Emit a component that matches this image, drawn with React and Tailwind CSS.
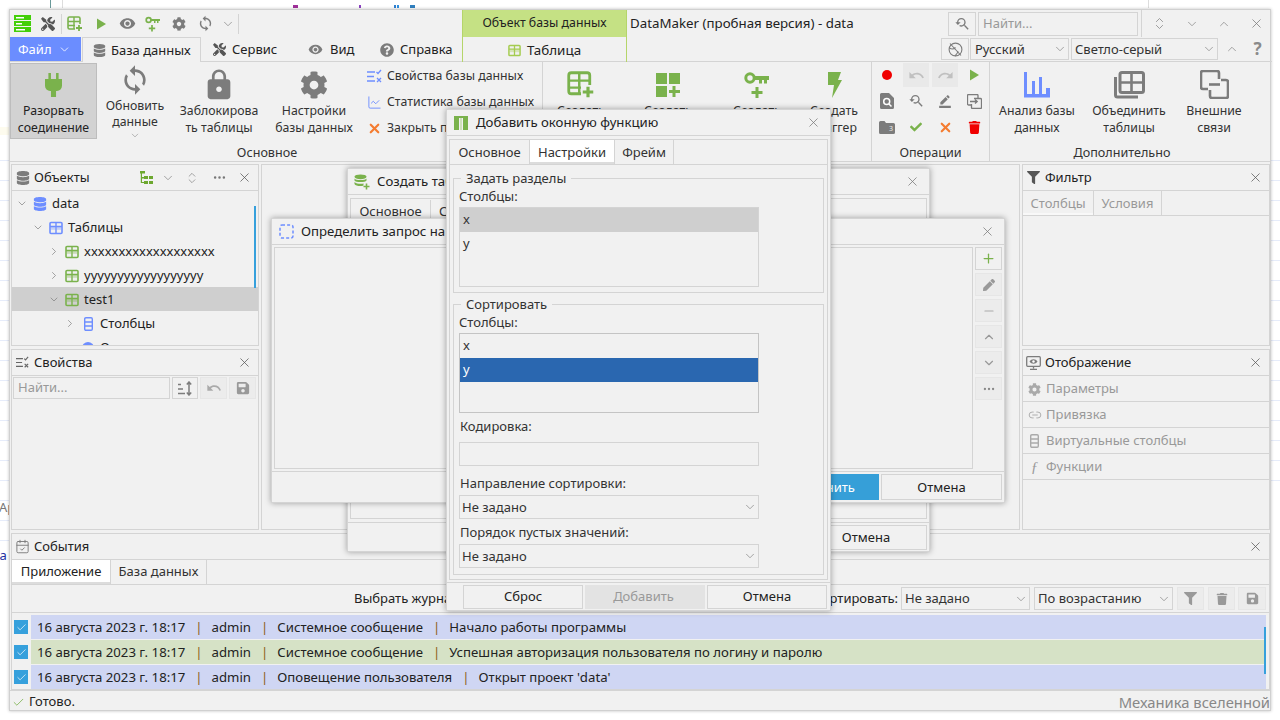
import React from "react";
import { ChevronDown, ChevronUp, ChevronRight, ChevronsUpDown, X, Ellipsis, ChartLine, Plus, Minus, CalendarCheck, Check, Link2 } from "lucide-react";
import { FaTools, FaCog, FaDatabase, FaQuestionCircle, FaCheck, FaTrash, FaFilter, FaSave, FaPen } from "react-icons/fa";
import { MdVisibility, MdSync, MdLock, MdUndo, MdRedo, MdYoutubeSearchedFor, MdBorderColor } from "react-icons/md";

const G = "#7ab24c";
const GR = "#7c7c7c";
const BL = "#6e8eff";

const TableIcon = ({ c = G, s = 14 }) => (
  <svg width={s} height={s} viewBox="0 0 14 14"><rect x="1" y="1.5" width="12" height="11" rx="1" fill="none" stroke={c} strokeWidth="1.6" /><path d="M1 5.5h12M7 2v10" stroke={c} strokeWidth="1.4" /><rect x="2" y="6" width="4.5" height="2.8" fill={c} opacity=".35" /><rect x="7.5" y="6" width="4.5" height="2.8" fill={c} opacity=".35" /></svg>
);
const MenuIcon = () => (
  <svg width="17" height="17" viewBox="0 0 17 17"><path d="M0 0h17v5H0zM0 6h17v5H0zM0 12h17v5H0z" fill="#43cf08" /><path d="M2 2h8v1.4H2zM2 8h6v1.4H2zM2 14h9v1.4H2z" fill="#fff" /></svg>
);
const TablePlus = ({ s = 16 }) => (
  <svg width={s} height={s} viewBox="0 0 16 16"><path d="M8 13H2.5A1.5 1.5 0 0 1 1 11.5v-9A1.5 1.5 0 0 1 2.5 1h9A1.5 1.5 0 0 1 13 2.500V8" fill="none" stroke={G} strokeWidth="1.6" /><path d="M1 5.500h12M1 9.500h7M7 1v12" stroke={G} strokeWidth="1.400" /><path d="M12 9v6M9 12h6" stroke={G} strokeWidth="1.800" /></svg>
);
const Play = ({ s = 12 }) => (<svg width={s} height={s} viewBox="0 0 12 12"><path d="M2 0.500 11 6 2 11.500z" fill={G} /></svg>);
const KeyPlus = ({ s = 16 }) => (
  <svg width={s} height={s} viewBox="0 0 16 16"><circle cx="3.600" cy="4" r="2.400" fill="none" stroke={G} strokeWidth="1.700" /><path d="M6 3h9v2h-1.500v2H12V5h-1.500v2H9V5H6z" fill={G} /><path d="M7 9v6.500M3.800 12.300h6.400" stroke={G} strokeWidth="1.700" /></svg>
);
const Plug = () => (
  <svg width="17" height="24" viewBox="0 0 20 28"><path d="M4 0h3v7H4zM13 0h3v7h-3z" fill={G} /><path d="M0 7h20v8a6 6 0 0 1-6 6h-1v7H7v-7H6a6 6 0 0 1-6-6z" fill={G} /></svg>
);
const PropsIcon = ({ c = BL, s = 15 }) => (
  <svg width={s} height={s} viewBox="0 0 15 15" fill="none" stroke={c} strokeWidth="1.300"><path d="M0 3h8M0 7.500h7M0 12h8" /><path d="M9.500 3l1.500 1.500L14 1M10 9l4 4M14 9l-4 4" /></svg>
);
const IndexPlus = () => (
  <svg width="26" height="26" viewBox="0 0 26 26"><path d="M1 1h11v11H1zM14 1h11v11H14zM1 14h11v11H1z" fill={G} /><path d="M19 14v11M14 19.500h11" stroke={G} strokeWidth="3" /></svg>
);
const KeyBig = () => (
  <svg width="26" height="28" viewBox="0 0 26 28"><circle cx="6" cy="7" r="4.200" fill="none" stroke={G} strokeWidth="3" /><path d="M10 5h15v4h-2v3.500h-3V9h-2v3.500h-3V9h-5z" fill={G} /><path d="M13 16v11M7.500 21.500h11" stroke={G} strokeWidth="3" /></svg>
);
const Bolt = () => (<svg width="15" height="26" viewBox="0 0 15 26"><path d="M1 0h13l-3 8h4L5 26l2-13H1z" fill={G} /></svg>);
const Bars = () => (<svg width="28" height="26" viewBox="0 0 28 26"><path d="M1 0h3v22h5V9h3v13h4V5h3v17h4v-6h4v9.500H1z" fill={BL} /></svg>);
const MergeTbl = () => (
  <svg width="31" height="28" viewBox="0 0 31 28" fill="none" stroke={GR}><rect x="6" y="1.500" width="23.500" height="20" rx="2" strokeWidth="3" /><path d="M6 11.500h23M17.500 2v19" strokeWidth="2.600" /><path d="M1.500 6v18a2 2 0 0 0 2 2H24" strokeWidth="3" /></svg>
);
const Linked = ({ s = 29 }) => (
  <svg width={s} height={s} viewBox="0 0 29 29" fill="none" stroke={GR} strokeWidth="2.600"><path d="M8 19H3a2 2 0 0 1-2-2V3a2 2 0 0 1 2-2h14a2 2 0 0 1 2 2v6" /><path d="M21 10h5a2 2 0 0 1 2 2v14a2 2 0 0 1-2 2H12a2 2 0 0 1-2-2v-6" /><path d="M9 14.500h11" /></svg>
);
const DocSearch = () => (
  <svg width="14" height="16" viewBox="0 0 14 16"><path d="M0 1.500A1.500 1.500 0 0 1 1.500 0H9l5 5v9.500a1.500 1.500 0 0 1-1.500 1.500h-11A1.500 1.500 0 0 1 0 14.500z" fill={GR} /><circle cx="6.700" cy="8.500" r="3" fill="none" stroke="#fff" strokeWidth="1.500" /><path d="M9 11l2.500 2.500" stroke="#fff" strokeWidth="1.500" /></svg>
);
const CopyIn = () => (
  <svg width="15" height="15" viewBox="0 0 15 15" fill="none" stroke={GR} strokeWidth="1.300"><path d="M4 11H1.500a1 1 0 0 1-1-1V1.500a1 1 0 0 1 1-1H10a1 1 0 0 1 1 1V4" /><path d="M7 4.500h6.500a1 1 0 0 1 1 1v8a1 1 0 0 1-1 1H5.500a1 1 0 0 1-1-1V10" /><path d="M3 7.500h7M8 5.500l2.200 2-2.200 2" /></svg>
);
const Folder3 = () => (
  <svg width="16" height="13" viewBox="0 0 16 13"><path d="M0 1.500A1.500 1.500 0 0 1 1.500 0h4L7 2h7.500A1.500 1.500 0 0 1 16 3.500v8a1.500 1.500 0 0 1-1.500 1.500h-13A1.500 1.500 0 0 1 0 11.500z" fill={GR} /><text x="10" y="10" fontSize="7" fill="#eee">3</text></svg>
);
const TreeGreen = () => (
  <svg width="13" height="13" viewBox="0 0 13 13"><path d="M0 0h5v2.500H2V6h2V5h4v3H4V7.500H2V11h2v-1h4v3H4v-1H.8V2.500H0z" fill="#6da82f" /><path d="M9 5h4v3H9zM9 10h4v3H9z" fill="#6da82f" /></svg>
);
const NoGlobe = () => (
  <svg width="15" height="15" viewBox="0 0 15 15" fill="none" stroke={GR} strokeWidth="1.100"><circle cx="7.500" cy="7.500" r="6.400" /><path d="M2 1.500l11 12M1.500 6c3 2 5 .5 6-.5M7 14c2-2 3-4 3-5" /></svg>
);
const ColIcon = ({ c = BL }) => (
  <svg width="9" height="14" viewBox="0 0 9 14" fill="none" stroke={c} strokeWidth="1.400"><rect x=".7" y=".7" width="7.600" height="12.600" rx="1.200" /><path d="M1 5h7M1 9h7" /></svg>
);
const DbPlus = () => (
  <svg width="16" height="16" viewBox="0 0 16 16"><ellipse cx="6.500" cy="2.800" rx="6" ry="2.400" fill={G} /><path d="M.5 4.500c1 2 11 2 12 0v2c-1 2-11 2-12 0zM.5 8c1 2 8 2 9 1.500v2c-2 1-8 .8-9-1.500z" fill={G} /><path d="M12.500 9.500v6M9.500 12.500h6" stroke={G} strokeWidth="1.600" /></svg>
);
const Dashed = () => (<svg width="15" height="15" viewBox="0 0 15 15"><rect x="1" y="1" width="13" height="13" rx="2" fill="none" stroke={BL} strokeWidth="1.500" strokeDasharray="3 2.100" /></svg>);
const WinFn = () => (<svg width="14" height="14" viewBox="0 0 14 14"><path d="M0 0h14v14H0z" fill={G} /><path d="M5 2h4v12H5z" fill="#f1f1f1" /><path d="M6 2h2v12H6z" fill="#cfe0bd" /></svg>);
const MonitorEye = () => (
  <svg width="15" height="14" viewBox="0 0 15 14" fill="none"><rect x=".7" y=".7" width="13.600" height="9.600" rx="1" stroke={GR} strokeWidth="1.300" /><path d="M3.500 5.500C5.500 2.500 9.500 2.500 11.500 5.500 9.500 8.500 5.500 8.500 3.500 5.500z" fill={GR} /><circle cx="7.500" cy="5.500" r="1.200" fill="#fff" /><path d="M7.500 10.500v2M4 13.300h7" stroke={GR} strokeWidth="1.300" /></svg>
);
const SortIcon = () => (
  <svg width="15" height="15" viewBox="0 0 15 15" fill="none" stroke={GR} strokeWidth="1.500"><path d="M0 3.500h3M0 8h5M0 12.500h7M11 1v13M8.800 3.500 11 1l2.200 2.500M8.800 11.500 11 14l2.200-2.500" /></svg>
);

const Down = ({ s = 14, c = "#8a8a8a" }) => <ChevronDown size={s} color={c} strokeWidth={1.300} />;
const Close = ({ c = "#555" }) => <X size={15} color={c} strokeWidth={1.200} />;

const Select = ({ v, cls, tc = "" }) => (
  <div className={`flex items-center justify-between border border-[#d4d4d4] pl-[5px] pr-[1px] text-[#333] ${cls}`}>
    <span className={tc}>{v}</span><Down />
  </div>
);

const IconBtn = ({ children, cls = "", dis }) => (
  <div className={`flex items-center justify-center border ${dis ? "border-[#e6e6e6] bg-[#ececec]" : "border-[#d4d4d4]"} ${cls}`}>{children}</div>
);

const Big = ({ icon, a, b, w }) => (
  <div className={`flex flex-col items-center pt-[5px] ${w}`}>
    <div className="flex h-[35px] items-center justify-center">{icon}</div>
    <span className="whitespace-nowrap leading-[17px]">{a}</span>
    <span className="whitespace-nowrap leading-[17px]">{b}</span>
  </div>
);

const Section = ({ w, label, labelCls = "", children }) => (
  <div className={`flex shrink-0 flex-col border-r border-[#d4d4d4] ${w}`}>
    <div className="flex h-[79px]">{children}</div>
    <div className={`flex flex-1 items-start justify-center pt-[3px] text-[12.6px] leading-[17px] ${labelCls}`}>{label}</div>
  </div>
);

const Op = ({ children, dis }) => (
  <div className={`flex h-[24px] w-[26px] items-center justify-center ${dis ? "bg-[#e9e9e9]" : ""}`}>{children}</div>
);

const PanelHead = ({ icon, title, right }) => (
  <div className="flex h-[26px] shrink-0 items-center border-b border-[#d4d4d4] pl-[2px] pr-[6px]">
    <span className="flex w-[17px] justify-center">{icon}</span>
    <span className="ml-[3px] flex-1 text-[#222]">{title}</span>
    {right}
    <Close />
  </div>
);

const tree = [
  { pl: "pl-[4px]", ic: <FaDatabase size={14} color={BL} />, t: "data" },
  { pl: "pl-[20px]", ic: <TableIcon c={BL} />, t: "Таблицы" },
  { pl: "pl-[36px]", right: 1, ic: <TableIcon />, t: "xxxxxxxxxxxxxxxxxxx" },
  { pl: "pl-[36px]", right: 1, ic: <TableIcon />, t: "yyyyyyyyyyyyyyyyyy" },
  { pl: "pl-[36px]", ic: <TableIcon />, t: "test1", sel: 1 },
  { pl: "pl-[52px]", right: 1, ic: <ColIcon />, t: "Столбцы" },
  { pl: "pl-[52px]", none: 1, ic: <span className="h-[12px] w-[12px] rounded-full bg-[#6e8eff]" />, t: "Ограничения" },
];

const logs = [
  { bg: "bg-[#cfd6f3]", d: "Системное сообщение", m: "Начало работы программы" },
  { bg: "bg-[#d6e2c6]", d: "Системное сообщение", m: "Успешная авторизация пользователя по логину и паролю" },
  { bg: "bg-[#cfd6f3]", d: "Оповещение пользователя", m: "Открыт проект 'data'" },
];

const Bar = () => <span className="ml-[10px] mr-[9px] text-[#8b5a14]">|</span>;

const Dialog = ({ pos, icon, title, children }) => (
  <div className={`absolute flex flex-col border border-[#d4d4d4] bg-[#f1f1f1] shadow-[0_0_6px_rgba(0,0,0,0.35)] ${pos}`}>
    <div className="flex h-[26px] shrink-0 items-center border-b border-[#d4d4d4] pl-[6px] pr-[9px]">
      <span className="flex w-[16px] justify-center">{icon}</span>
      <span className="ml-[7px] flex-1 whitespace-nowrap pt-px text-[13.2px] text-[#222]">{title}</span>
      <Close c="#777" />
    </div>
    {children}
  </div>
);

const Group = ({ title, cls, children }) => (
  <div className={`relative border border-[#d4d4d4] px-[5px] ${cls}`}>
    <span className="absolute left-[7px] top-[-9px] bg-[#f1f1f1] px-[5px] leading-[17px] text-[#333]">{title}</span>
    {children}
  </div>
);

const ListBox = ({ dark, sel }) => (
  <div className={`flex h-[80px] w-[300px] flex-col border ${dark ? "border-[#c4c4c4]" : "border-[#d4d4d4]"}`}>
    <div className={`flex h-[24px] items-center pl-[3px] ${sel === 0 ? "bg-[#cfcfcf]" : ""}`}>x</div>
    <div className={`flex h-[24px] items-center pl-[3px] ${sel === 1 ? "bg-[#2a67b0] text-white" : ""}`}>y</div>
  </div>
);

export default function App() {
  return (
    <div className="relative h-[720px] w-[1280px] overflow-hidden bg-white pl-[9px] pt-[9px] font-['Noto_Sans',sans-serif] text-[13px] text-[#333]">
      {/* Desktop behind the window */}
      <div className="absolute left-0 top-[160px] h-[400px] w-[9px] bg-[repeating-linear-gradient(180deg,#e6ecfa_0,#e6ecfa_1px,transparent_1px,transparent_20px)]" />
      <div className="absolute right-0 top-[160px] h-[330px] w-[9px] bg-[repeating-linear-gradient(180deg,#e6ecfa_0,#e6ecfa_1px,transparent_1px,transparent_20px)]" />
      <div className="absolute left-0 top-[127px] h-[8px] w-[9px] bg-[#fdfbee]" />
      <span className="absolute left-[-1px] top-[498px] text-[#777]">Ap</span>
      <span className="absolute left-[-4px] top-[546px] text-[#2030a0]">Ja</span>
      <div className="absolute left-[50px] top-0 h-[8px] w-px bg-[#6a9a9a]" />
      <div className="absolute left-[62px] top-0 h-[8px] w-px bg-[#dddddd]" />
      <div className="absolute left-[1148px] top-0 h-[8px] w-px bg-[#dddddd]" />
      <div className="absolute left-[293px] top-[5px] h-[3px] w-[5px] bg-[#a0309a]" />
      <div className="absolute left-[359px] top-[5px] h-[3px] w-[2px] bg-[#8a40c0]" />
      <div className="absolute left-[394px] top-[5px] h-[3px] w-[2px] bg-[#3080d0]" />
      <div className="absolute left-[397px] top-[5px] h-[3px] w-[2px] bg-[#3090e0]" />
      <div className="absolute left-[410px] top-[5px] h-[3px] w-[5px] bg-[#3080c0]" />

      {/* Main window */}
      <div className="relative flex h-[702px] w-[1262px] flex-col border border-[#d0d0d0] bg-[#f1f1f1] shadow-[0_0_3px_rgba(0,0,0,0.25)]">
        {/* Header */}
        <div className="flex h-[52px] shrink-0">
          <div className="flex w-[452px] shrink-0 flex-col">
            <div className="flex h-[27px] items-center">
              <div className="flex w-[25px] justify-center"><MenuIcon /></div>
              <div className="flex w-[26px] justify-center"><FaTools size={14} color="#555" /></div>
              <div className="h-[20px] w-px bg-[#d4d4d4]" />
              <div className="flex w-[26px] justify-center"><TablePlus /></div>
              <div className="flex w-[26px] justify-center"><Play /></div>
              <div className="flex w-[26px] justify-center"><MdVisibility size={17} color={GR} /></div>
              <div className="flex w-[26px] justify-center"><KeyPlus /></div>
              <div className="flex w-[26px] justify-center"><FaCog size={14} color={GR} /></div>
              <div className="flex w-[26px] justify-center"><MdSync size={17} color={GR} /></div>
              <div className="flex w-[20px] justify-center"><Down /></div>
              <div className="h-[20px] w-px bg-[#d4d4d4]" />
            </div>
            <div className="flex h-[25px] items-stretch border-b border-[#d4d4d4]">
              <div className="flex w-[71px] items-center bg-[#6b8dff] pl-[8px] pt-px text-white">Файл<ChevronDown className="ml-[6px]" size={13} color="#fff" strokeWidth={1.500} /></div>
              <div className="z-10 ml-px -mb-px flex w-[119px] items-center border-x border-t border-[#d4d4d4] bg-[#f1f1f1] pl-[10px] pt-px text-[#222]"><FaDatabase size={13} color={GR} /><span className="ml-[5px]">База данных</span></div>
              <div className="flex w-[94px] items-center pl-[12px] pt-px text-[#222]"><FaTools size={13} color="#555" /><span className="ml-[6px]">Сервис</span></div>
              <div className="flex w-[72px] items-center pl-[13px] pt-px text-[#222]"><MdVisibility size={15} color={GR} /><span className="ml-[7px]">Вид</span></div>
              <div className="flex flex-1 items-center pl-[13px] pt-px text-[#222]"><FaQuestionCircle size={14} color={GR} /><span className="ml-[6px]">Справка</span></div>
            </div>
          </div>
          <div className="flex w-[165px] shrink-0 flex-col border-x border-[#b5d56a]">
            <div className="flex h-[27px] items-center justify-center bg-[#c5e184] text-[12.3px] text-[#222]">Объект базы данных</div>
            <div className="flex h-[25px] items-center justify-center border-b border-[#d4d4d4] pt-[2px] text-[13.400px] text-[#222]"><TableIcon c="#a5cc50" s={13} /><span className="ml-[6px]">Таблица</span></div>
          </div>
          <div className="flex flex-1 flex-col">
            <div className="flex h-[27px] items-center">
              <span className="ml-[3px] w-[318px] whitespace-nowrap text-[13.3px] text-[#222]">DataMaker (пробная версия) - data</span>
              <IconBtn cls="h-[24px] w-[28px]"><MdYoutubeSearchedFor size={16} color={GR} /></IconBtn>
              <div className="ml-[2px] flex h-[24px] w-[160px] items-center border border-[#d4d4d4] pl-[4px] text-[#999]">Найти...</div>
              <div className="ml-[3px] h-[27px] w-px bg-[#d4d4d4]" />
              <div className="flex w-[34px] justify-center"><ChevronsUpDown size={15} color="#8a8a8a" strokeWidth={1.300} /></div>
              <div className="flex w-[32px] justify-center"><Down /></div>
              <div className="flex w-[32px] justify-center"><ChevronUp size={14} color="#8a8a8a" strokeWidth={1.300} /></div>
              <div className="flex w-[32px] justify-center"><X size={15} color="#777" strokeWidth={1.200} /></div>
            </div>
            <div className="flex h-[25px] items-start border-b border-[#d4d4d4] pt-[1px]">
              <IconBtn cls="ml-[314px] h-[22px] w-[28px]"><NoGlobe /></IconBtn>
              <Select v="Русский" tc="pt-px" cls="ml-px h-[22px] w-[99px] !pl-[4px]" />
              <Select v="Светло-серый" tc="pt-px" cls="ml-[2px] h-[22px] w-[147px] !pl-[3px]" />
              <div className="flex h-[22px] w-[27px] items-center justify-center"><ChevronUp size={14} color="#8a8a8a" strokeWidth={1.300} /></div>
              <div className="flex h-[22px] w-[25px] items-center justify-center text-[17px] font-bold text-[#8a8a8a]">?</div>
            </div>
          </div>
        </div>

        {/* Ribbon */}
        <div className="flex h-[100px] shrink-0 border-b border-[#d4d4d4] text-[12.3px]">
          <Section w="w-[533px]" label="Основное" labelCls="pr-[18px]">
            <div className="mt-px flex h-[76px] w-[87px] flex-col items-center border border-[#bdbdbd] bg-[#d2d2d2] pt-[3px]">
              <div className="flex h-[35px] items-center justify-center"><Plug /></div>
              <span className="leading-[17px] text-[#222]">Разорвать</span>
              <span className="leading-[17px] text-[#222]">соединение</span>
            </div>
            <div className="flex w-[76px] flex-col items-center pt-[1px]">
              <div className="flex h-[36px] items-center"><MdSync size={32} color={GR} /></div>
              <span className="mt-[2px] leading-[16px]">Обновить</span>
              <span className="leading-[16px]">данные</span>
              <ChevronDown size={12} color="#8a8a8a" strokeWidth={1.300} />
            </div>
            <Big w="ml-[2px] w-[88px]" icon={<MdLock size={34} color={GR} />} a="Заблокирова" b="ть таблицы" />
            <Big w="w-[102px]" icon={<FaCog size={28} color={GR} />} a="Настройки" b="базы данных" />
            <div className="flex flex-col pl-[2px] pt-[1px]">
              <div className="flex h-[26px] items-center"><PropsIcon /><span className="ml-[5px] whitespace-nowrap">Свойства базы данных</span></div>
              <div className="flex h-[26px] items-center"><ChartLine size={15} color={BL} strokeWidth={1.500} /><span className="ml-[5px] whitespace-nowrap">Статистика базы данных</span></div>
              <div className="flex h-[26px] items-center"><X size={15} color="#f47c30" strokeWidth={3.500} /><span className="ml-[5px] whitespace-nowrap">Закрыть проект</span></div>
            </div>
          </Section>
          <Section w="w-[329px]" label="Создание">
            <Big w="w-[76px]" icon={<TablePlus s={28} />} a="Создать" b="таблицу" />
            <Big w="w-[98px]" icon={<IndexPlus />} a="Создать" b="индекс" />
            <Big w="w-[80px]" icon={<KeyBig />} a="Создать" b="ключ" />
            <Big w="w-[74px]" icon={<Bolt />} a="Создать" b="триггер" />
          </Section>
          <Section w="w-[118px]" label="Операции">
            <div className="grid grid-cols-[26px_26px_26px_26px] grid-rows-[26px_26px_26px] gap-x-[3px] pl-[2px] pt-px">
              <Op><span className="h-[10px] w-[10px] rounded-full bg-[#f00000]" /></Op>
              <Op dis><MdUndo size={17} color="#c0c0c0" /></Op>
              <Op dis><MdRedo size={17} color="#c0c0c0" /></Op>
              <Op><Play /></Op>
              <Op><DocSearch /></Op>
              <Op><MdYoutubeSearchedFor size={16} color={GR} /></Op>
              <Op><MdBorderColor size={14} color={GR} /></Op>
              <Op><CopyIn /></Op>
              <Op><Folder3 /></Op>
              <Op><FaCheck size={12} color={G} /></Op>
              <Op><X size={15} color="#f47c30" strokeWidth={3.500} /></Op>
              <Op><FaTrash size={13} color="#f00000" /></Op>
            </div>
          </Section>
          <Section w="flex-1 !border-r-0" label="Дополнительно" labelCls="pr-[16px]">
            <Big w="w-[94px]" icon={<Bars />} a="Анализ базы" b="данных" />
            <Big w="w-[90px]" icon={<MergeTbl />} a="Объединить" b="таблицы" />
            <Big w="ml-[2px] w-[76px]" icon={<Linked />} a="Внешние" b="связи" />
          </Section>
        </div>

        {/* Docks */}
        <div className="mt-[2px] flex h-[366px] shrink-0 gap-[2px] pl-px">
          <div className="flex w-[248px] shrink-0 flex-col gap-[3px]">
            <div className="relative flex h-[182px] flex-col overflow-hidden border border-[#d4d4d4]">
              <PanelHead
                icon={<FaDatabase size={14} color={GR} />}
                title="Объекты"
                right={
                  <div className="flex items-center">
                    <TreeGreen />
                    <span className="ml-[8px]"><Down /></span>
                    <span className="ml-[10px]"><ChevronsUpDown size={14} color="#8a8a8a" strokeWidth={1.300} /></span>
                    <span className="ml-[13px] mr-[10px]"><Ellipsis size={15} color="#777" /></span>
                  </div>
                }
              />
              {tree.map((r) => (
                <div key={r.t} className={`flex h-[24px] shrink-0 items-center pt-px ${r.pl} ${r.sel ? "bg-[#cfcfcf]" : ""}`}>
                  <span className="flex w-[12px] justify-center">
                    {r.none ? null : r.right ? <ChevronRight size={13} color="#777" strokeWidth={1.300} /> : <ChevronDown size={13} color="#777" strokeWidth={1.300} />}
                  </span>
                  <span className="ml-[5px] flex w-[14px] justify-center">{r.ic}</span>
                  <span className="ml-[5px] whitespace-nowrap text-[#222]">{r.t}</span>
                </div>
              ))}
              <div className="absolute left-[242px] top-[41px] h-[82px] w-[2px] bg-[#36a0dc]" />
            </div>
            <div className="flex flex-1 flex-col border border-[#d4d4d4]">
              <PanelHead icon={<PropsIcon c="#666" s={13} />} title="Свойства" />
              <div className="flex h-[23px] gap-[2px] pl-px pr-[2px] pt-px">
                <div className="flex w-[158px] items-center border border-[#d4d4d4] pl-[4px] text-[#999]">Найти...</div>
                <IconBtn cls="w-[27px]"><SortIcon /></IconBtn>
                <IconBtn dis cls="w-[27px]"><MdUndo size={16} color="#aaa" /></IconBtn>
                <IconBtn dis cls="w-[27px]"><FaSave size={14} color="#999" /></IconBtn>
              </div>
            </div>
          </div>
          <div className="flex-1 border border-[#d4d4d4]" />
          <div className="flex w-[248px] shrink-0 flex-col gap-[3px]">
            <div className="flex h-[182px] flex-col border border-[#d4d4d4]">
              <PanelHead icon={<FaFilter size={13} color="#555" />} title="Фильтр" />
              <div className="flex h-[25px] shrink-0 border-b border-[#d4d4d4] text-[#999]">
                <div className="flex w-[71px] items-center justify-center border-r border-[#d4d4d4] pt-px shadow-[inset_0_-2px_0_#f8f8f8]">Столбцы</div>
                <div className="flex w-[68px] items-center justify-center border-r border-[#d4d4d4] pt-px">Условия</div>
              </div>
            </div>
            <div className="flex flex-1 flex-col border border-[#d4d4d4]">
              <PanelHead icon={<MonitorEye />} title="Отображение" />
              {[
                [<FaCog size={13} color="#aaa" />, "Параметры"],
                [<Link2 size={14} color="#aaa" strokeWidth={1.600} />, "Привязка"],
                [<ColIcon c="#aaa" />, "Виртуальные столбцы"],
                [<span className="font-['Liberation_Serif',serif] text-[15px] italic text-[#999]">ƒ</span>, "Функции"],
              ].map(([ic, t]) => (
                <div key={t} className="flex h-[26px] shrink-0 items-center border-b border-[#d4d4d4] pl-[3px] pt-px text-[#999]">
                  <span className="flex w-[17px] justify-center">{ic}</span>
                  <span className="ml-[3px]">{t}</span>
                </div>
              ))}
            </div>
          </div>
        </div>

        {/* Events */}
        <div className="ml-px mt-[3px] flex h-[157px] shrink-0 flex-col border border-[#d4d4d4]">
          <PanelHead icon={<CalendarCheck size={15} color={GR} strokeWidth={1.500} />} title="События" />
          <div className="flex h-[25px] shrink-0 border-b border-[#d4d4d4]">
            <div className="flex w-[98px] flex-col items-center justify-center bg-white text-[#222] shadow-[inset_0_-2px_0_#dcdcdc]"><span>Приложение</span></div>
            <div className="flex w-[97px] items-center justify-center border-x border-[#d4d4d4]">База данных</div>
          </div>
          <div className="flex h-[28px] shrink-0 items-center border-b border-[#d4d4d4]">
            <span className="ml-[342px] whitespace-nowrap text-[#222]">Выбрать журнал:</span>
            <span className="ml-auto whitespace-nowrap text-[#222]">Сортировать:</span>
            <Select v="Не задано" cls="ml-[3px] h-[23px] w-[129px] !pl-[3px]" />
            <Select v="По возрастанию" cls="ml-[4px] h-[23px] w-[139px] !pl-[3px]" />
            <IconBtn dis cls="ml-[4px] h-[23px] w-[27px]"><FaFilter size={13} color="#999" /></IconBtn>
            <IconBtn dis cls="ml-[4px] h-[23px] w-[27px]"><FaTrash size={12} color="#999" /></IconBtn>
            <IconBtn dis cls="ml-[3px] mr-[3px] h-[23px] w-[28px]"><FaSave size={13} color="#999" /></IconBtn>
          </div>
          <div className="relative flex flex-col gap-px pl-[2px] pr-[3px] pt-[2px]">
            {logs.map((l, i) => (
              <div key={i} className="flex h-[24px] items-center">
                <span className="flex h-[14px] w-[14px] items-center justify-center bg-[#36a0dc]"><Check size={11} color="#fff" strokeWidth={1.500} /></span>
                <div className={`ml-[3px] flex h-full flex-1 items-center whitespace-nowrap pl-[6px] pt-px text-[13.2px] text-[#222] ${l.bg}`}>
                  <span>16 августа 2023 г. 18:17</span><Bar /><span>admin</span><Bar /><span>{l.d}</span><Bar /><span>{l.m}</span>
                </div>
              </div>
            ))}
            <div className="absolute right-[3px] top-[14px] h-[47px] w-[2px] bg-[#36a0dc]" />
          </div>
        </div>

        {/* Status */}
        <div className="flex flex-1 items-center justify-between border-t border-[#d4d4d4] pl-[2px]">
          <div className="flex items-center"><Check size={13} color={G} strokeWidth={1.500} /><span className="ml-[4px] text-[#222]">Готово.</span></div>
          <span className="text-[14.8px] text-[#888]">Механика вселенной</span>
        </div>
      </div>

      {/* Dialog: create table */}
      <Dialog pos="left-[347px] top-[168px] h-[384px] w-[583px]" icon={<DbPlus />} title="Создать таблицу">
        <div className="mx-[2px] mt-[3px] flex h-[321px] flex-col border border-[#d4d4d4]">
          <div className="flex h-[25px] border-b border-[#d4d4d4] pt-px">
            <span className="flex w-[80px] items-center justify-center border-r border-[#d4d4d4]">Основное</span>
            <span className="flex items-center px-[8px]">Столбцы</span>
          </div>
        </div>
        <div className="mt-[3px] flex h-[28px] justify-end border-t border-[#d4d4d4] pr-[2px] pt-[2px]">
          <div className="flex w-[122px] items-center justify-center border border-[#d4d4d4] text-[#222]">Отмена</div>
        </div>
      </Dialog>

      {/* Dialog: query */}
      <Dialog pos="left-[271px] top-[218px] h-[285px] w-[734px]" icon={<Dashed />} title="Определить запрос на выборку">
        <div className="flex h-[224px] gap-[2px] px-[2px] pt-[2px]">
          <div className="w-[699px] border border-[#d4d4d4]" />
          <div className="flex flex-col gap-[3px]">
            <IconBtn cls="h-[23px] w-[27px]"><Plus size={15} color={G} strokeWidth={2} /></IconBtn>
            <IconBtn dis cls="h-[23px] w-[27px]"><FaPen size={12} color="#999" /></IconBtn>
            <IconBtn dis cls="h-[23px] w-[27px]"><Minus size={14} color="#aaa" strokeWidth={1.800} /></IconBtn>
            <IconBtn dis cls="h-[23px] w-[27px]"><ChevronUp size={14} color="#999" /></IconBtn>
            <IconBtn dis cls="h-[23px] w-[27px]"><ChevronDown size={14} color="#999" /></IconBtn>
            <IconBtn dis cls="h-[23px] w-[27px]"><Ellipsis size={14} color="#888" /></IconBtn>
          </div>
        </div>
        <div className="mt-[2px] flex flex-1 justify-end gap-[2px] border-t border-[#d4d4d4] p-[2px]">
          <div className="flex w-[120px] items-center justify-center bg-[#369fd8] pt-px text-white">Применить</div>
          <div className="flex w-[121px] items-center justify-center border border-[#d4d4d4] pt-px text-[#222]">Отмена</div>
        </div>
      </Dialog>

      {/* Dialog: window function */}
      <Dialog pos="left-[446px] top-[109px] h-[502px] w-[385px]" icon={<WinFn />} title="Добавить оконную функцию">
        <div className="mx-[2px] mt-[3px] flex h-[441px] flex-col border border-[#d4d4d4]">
          <div className="flex h-[25px] shrink-0 border-b border-[#d4d4d4]">
            <span className="flex w-[80px] items-center justify-center border-r border-[#d4d4d4] pt-px">Основное</span>
            <span className="flex w-[85px] items-center justify-center border-r border-[#d4d4d4] bg-white pt-px shadow-[inset_0_-2px_0_#dcdcdc]">Настройки</span>
            <span className="flex w-[59px] items-center justify-center border-r border-[#d4d4d4] pt-px">Фрейм</span>
          </div>
          <div className="flex flex-1 flex-col px-[3px] pt-[13px]">
            <Group title="Задать разделы" cls="h-[115px]">
              <div className="pt-[9px] leading-[17px]">Столбцы:</div>
              <div className="mt-[2px]"><ListBox sel={0} /></div>
            </Group>
            <Group title="Сортировать" cls="mt-[11px] h-[271px]">
              <div className="pt-[9px] leading-[17px]">Столбцы:</div>
              <div className="mt-[2px]"><ListBox dark sel={1} /></div>
              <div className="ml-px mt-[5px] leading-[17px]">Кодировка:</div>
              <div className="mt-[7px] h-[24px] w-[300px] border border-[#d4d4d4]" />
              <div className="ml-px mt-[9px] leading-[17px]">Направление сортировки:</div>
              <Select v="Не задано" tc="pt-px" cls="mt-[3px] h-[24px] w-[300px] !pl-[2px]" />
              <div className="ml-px mt-[5px] leading-[17px]">Порядок пустых значений:</div>
              <Select v="Не задано" tc="pt-px" cls="mt-[3px] h-[24px] w-[300px] !pl-[2px]" />
            </Group>
          </div>
        </div>
        <div className="mt-[2px] flex flex-1 border-t border-[#d4d4d4] pb-[1px] pl-[16px] pr-[2px] pt-[2px]">
          <div className="flex w-[120px] items-center justify-center border border-[#d4d4d4] text-[#222]">Сброс</div>
          <div className="ml-[2px] flex w-[120px] items-center justify-center bg-[#e3e3e3] pr-[3px] text-[#999]">Добавить</div>
          <div className="ml-[2px] flex w-[120px] items-center justify-center border border-[#d4d4d4] text-[#222]">Отмена</div>
        </div>
      </Dialog>
    </div>
  );
}
